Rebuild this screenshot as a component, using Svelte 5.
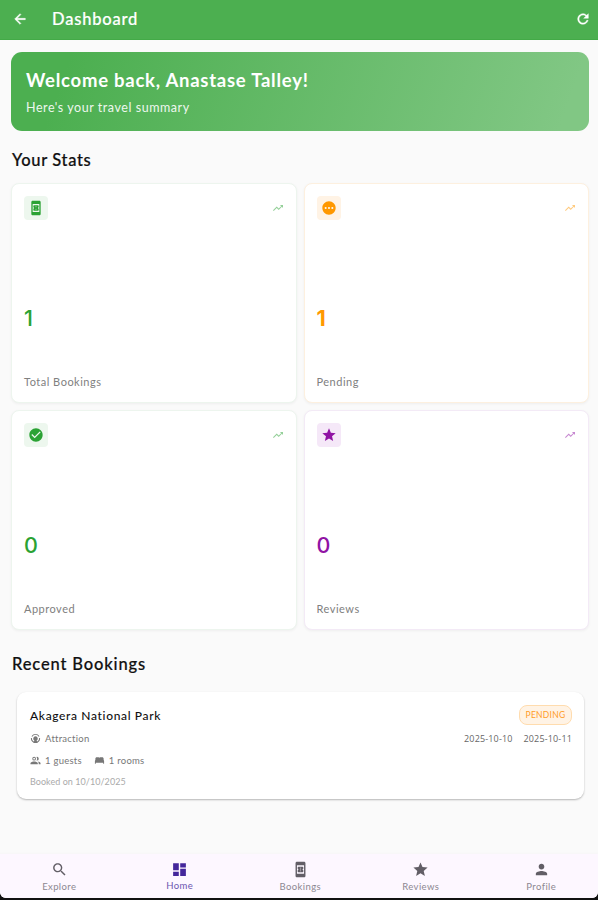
<script lang="ts">
  const icons: Record<string, string> = {
    back: 'M20 11H7.83l5.59-5.59L12 4l-8 8 8 8 1.41-1.41L7.83 13H20v-2z',
    refresh:
      'M17.65 6.35C16.2 4.9 14.21 4 12 4c-4.42 0-7.99 3.58-7.99 8s3.57 8 7.99 8c3.73 0 6.84-2.55 7.73-6h-2.08c-.82 2.33-3.04 4-5.65 4-3.31 0-6-2.69-6-6s2.69-6 6-6c1.66 0 3.14.69 4.22 1.78L13 11h7V4l-2.35 2.35z',
    booking:
      'M17 1H7c-1.1 0-2 .9-2 2v18c0 1.1.9 2 2 2h10c1.1 0 2-.9 2-2V3c0-1.1-.9-2-2-2zM7 18V6h10v12H7zm9-7V9.14C16 8.51 15.55 8 15 8H9c-.55 0-1 .51-1 1.14V11c.55 0 1 .45 1 1s-.45 1-1 1v1.86c0 .63.45 1.14 1 1.14h6c.55 0 1-.51 1-1.14V13c-.55 0-1-.45-1-1s.45-1 1-1zm-3.5 3.5h-1v-1h1v1zm0-2h-1v-1h1v1zm0-2h-1v-1h1v1z',
    pending:
      'M12 2C6.48 2 2 6.48 2 12s4.48 10 10 10 10-4.48 10-10S17.52 2 12 2zM7 13.5c-.83 0-1.5-.67-1.5-1.5s.67-1.5 1.5-1.5 1.5.67 1.5 1.5-.67 1.5-1.5 1.5zm5 0c-.83 0-1.5-.67-1.5-1.5s.67-1.5 1.5-1.5 1.5.67 1.5 1.5-.67 1.5-1.5 1.5zm5 0c-.83 0-1.5-.67-1.5-1.5s.67-1.5 1.5-1.5 1.5.67 1.5 1.5-.67 1.5-1.5 1.5z',
    check:
      'M12 2C6.48 2 2 6.48 2 12s4.48 10 10 10 10-4.48 10-10S17.52 2 12 2zm-2 15l-5-5 1.41-1.41L10 14.17l7.59-7.59L19 8l-9 9z',
    star: 'M12 17.27L18.18 21l-1.64-7.03L22 9.24l-7.19-.61L12 2 9.19 8.63 2 9.24l5.46 4.73L5.82 21z',
    trend: 'M16 6l2.29 2.29-4.88 4.88-4-4L2 16.59 3.41 18l6-6 4 4 6.3-6.29L22 12V6z',
    search:
      'M15.5 14h-.79l-.28-.27C15.41 12.59 16 11.11 16 9.5 16 5.91 13.09 3 9.5 3S3 5.91 3 9.5 5.91 16 9.5 16c1.61 0 3.09-.59 4.23-1.57l.27.28v.79l5 4.99L20.49 19l-4.99-5zm-6 0C7.01 14 5 11.99 5 9.5S7.01 5 9.5 5 14 7.01 14 9.5 11.99 14 9.5 14z',
    dashboard: 'M3 13h8V3H3v10zm0 8h8v-6H3v6zm10 0h8V11h-8v10zm0-18v6h8V3h-8z',
    person:
      'M12 12c2.21 0 4-1.79 4-4s-1.79-4-4-4-4 1.79-4 4 1.79 4 4 4zm0 2c-2.67 0-8 1.34-8 4v2h16v-2c0-2.66-5.33-4-8-4z',
    group:
      'M9 12a4 4 0 1 0 0-8 4 4 0 0 0 0 8zm0-2a2 2 0 1 1 0-4 2 2 0 0 1 0 4zM1 20v-2c0-2.66 5.33-4 8-4s8 1.34 8 4v2H1zm14-8a4 4 0 1 0-1-7.86 6 6 0 0 1 0 7.72c.32.09.66.14 1 .14zm1.7 2.13A5 5 0 0 1 19 18v2h4v-2c0-2.18-3.58-3.47-6.3-3.87z',
    bed: 'M21 10.78V8c0-1.65-1.35-3-3-3h-4c-.77 0-1.47.3-2 .78A3 3 0 0 0 10 5H6C4.35 5 3 6.35 3 8v2.78A3 3 0 0 0 2 13v6h2v-2h16v2h2v-6c0-.88-.39-1.67-1-2.22z',
    attraction:
      'M12 2a10 10 0 0 0-8.7 5l1.7 1a8 8 0 0 1 14 0l1.7-1A10 10 0 0 0 12 2zM2 11a10 10 0 0 0 6 10l.8-1.9A8 8 0 0 1 4 11H2zm18 0a8 8 0 0 1-4.8 8.1L16 21a10 10 0 0 0 6-10h-2zM12 7a5 5 0 0 0-2.5 9.3L7.5 22h9l-2-5.7A5 5 0 0 0 12 7z'
  };

  const stats = [
    { label: 'Total Bookings', value: 1, icon: 'booking', tone: 'green' },
    { label: 'Pending', value: 1, icon: 'pending', tone: 'orange' },
    { label: 'Approved', value: 0, icon: 'check', tone: 'green' },
    { label: 'Reviews', value: 0, icon: 'star', tone: 'purple' }
  ];

  const tabs = [
    { label: 'Explore', icon: 'search' },
    { label: 'Home', icon: 'dashboard' },
    { label: 'Bookings', icon: 'booking' },
    { label: 'Reviews', icon: 'star' },
    { label: 'Profile', icon: 'person' }
  ];

  let activeTab = $state('Home');
</script>

{#snippet icon(name: string)}
  <svg class="icon" viewBox="0 0 24 24" aria-hidden="true"><path d={icons[name]} /></svg>
{/snippet}

<div class="screen">
  <div class="page">
    <header>
      <button class="back" aria-label="Back">{@render icon('back')}</button>
      <h1>Dashboard</h1>
      <button class="refresh" aria-label="Refresh">{@render icon('refresh')}</button>
    </header>

    <main>
      <section class="banner">
        <h2>Welcome back, Anastase Talley!</h2>
        <p>Here's your travel summary</p>
      </section>

      <h3 class="stats-title">Your Stats</h3>
      <div class="stats">
        {#each stats as stat}
          <div class="stat {stat.tone}">
            <div class="stat-top">
              <span class="stat-icon">{@render icon(stat.icon)}</span>
              <span class="trend">{@render icon('trend')}</span>
            </div>
            <strong>{stat.value}</strong>
            <span class="stat-label">{stat.label}</span>
          </div>
        {/each}
      </div>

      <h3 class="recent-title">Recent Bookings</h3>
      <article class="booking">
        <div class="row">
          <h4>Akagera National Park</h4>
          <span class="badge">PENDING</span>
        </div>
        <div class="row kind">
          <span class="meta">{@render icon('attraction')}<span>Attraction</span></span>
          <span class="dates"><span>2025-10-10</span><span>2025-10-11</span></span>
        </div>
        <div class="counts">
          <span class="meta">{@render icon('group')}<span>1 guests</span></span>
          <span class="meta">{@render icon('bed')}<span>1 rooms</span></span>
        </div>
        <p class="booked">Booked on 10/10/2025</p>
      </article>
    </main>

    <nav>
      {#each tabs as tab}
        <button class="tab" class:active={activeTab === tab.label} onclick={() => (activeTab = tab.label)}>
          {@render icon(tab.icon)}
          <span>{tab.label}</span>
        </button>
      {/each}
    </nav>
  </div>
</div>

<style>
  :global(body) {
    margin: 0;
    background: #111;
  }

  .screen {
    height: 900px;
    background: #111;
    font-family: Lato, 'Open Sans', sans-serif;
  }

  .page {
    display: flex;
    flex-direction: column;
    height: 898px;
    overflow: hidden;
    border-radius: 0 0 6px 6px;
    background: #fafafa;
  }

  h1, h2, h3, h4, p {
    margin: 0;
    white-space: nowrap;
  }

  button {
    padding: 0;
    border: 0;
    background: none;
    color: inherit;
    font: inherit;
  }

  .icon {
    display: block;
    width: 16px;
    height: 16px;
    fill: currentColor;
  }

  header {
    display: flex;
    align-items: center;
    box-sizing: border-box;
    flex: none;
    height: 40px;
    padding: 0 7px 2px 12px;
    border-bottom: 1px solid #43aa47;
    background: #4caf50;
    color: #fff;
  }

  header .icon {
    stroke: currentColor;
    stroke-width: 0.6;
  }

  h1 {
    flex: 1;
    margin-left: 24px;
    font-size: 16.5px;
    font-weight: 500;
    letter-spacing: 0.8px;
    -webkit-text-stroke: 0.2px currentColor;
  }

  main {
    flex: 1;
    padding: 12px 9px 0 11px;
  }

  .banner {
    box-sizing: border-box;
    height: 79px;
    padding: 17px 15px;
    border-radius: 11px;
    background: linear-gradient(110deg, #4caf50 10%, #81c784 95%);
    color: #fff;
  }

  h2 {
    font-size: 18.5px;
    line-height: 23px;
    font-weight: 700;
    letter-spacing: 0.75px;
  }

  .banner p {
    margin-top: 8px;
    font-size: 12.5px;
    line-height: 16px;
    letter-spacing: 0.55px;
    opacity: 0.9;
  }

  h3 {
    padding-left: 1px;
    color: #111;
    font-size: 16.5px;
    line-height: 22px;
    font-weight: 500;
    letter-spacing: 0.65px;
    -webkit-text-stroke: 0.2px currentColor;
  }

  .stats-title {
    margin: 18px 0 12px;
  }

  .stats {
    display: grid;
    grid-template-columns: 1fr 1fr;
    grid-auto-rows: 220px;
    gap: 7px;
  }

  .stat {
    display: flex;
    flex-direction: column;
    box-sizing: border-box;
    padding: 12px 12px 11px;
    border: 1px solid var(--edge);
    border-radius: 8px;
    background: #fff;
    box-shadow: 0 1px 3px rgba(0, 0, 0, 0.05);
    color: var(--color);
  }

  .green {
    --color: #2ba234;
    --tint: #edf7ee;
    --edge: #edf5ee;
  }

  .orange {
    --color: #ff9800;
    --tint: #fff3e5;
    --edge: #fdf0df;
  }

  .purple {
    --color: #9013a4;
    --tint: #f5e8f8;
    --edge: #f3eaf6;
  }

  .stat-top {
    display: flex;
    align-items: center;
    justify-content: space-between;
  }

  .stat-icon {
    padding: 4px;
    border-radius: 4px;
    background: var(--tint);
  }

  .trend {
    opacity: 0.5;
  }

  .trend .icon {
    width: 12px;
    height: 12px;
  }

  strong {
    margin: auto 0 41px;
    font-family: Inter, 'Open Sans', sans-serif;
    font-size: 21.5px;
    line-height: 28px;
    font-weight: 500;
  }

  .orange strong {
    font-weight: 700;
  }

  .stat-label {
    color: #808080;
    font-size: 11px;
    line-height: 18px;
    letter-spacing: 0.5px;
  }

  .recent-title {
    margin: 23px 0 17px;
    letter-spacing: 0.85px;
  }

  .booking {
    box-sizing: border-box;
    height: 107px;
    margin: 0 5px 0 6px;
    padding: 13px 12px 0 13px;
    border-radius: 9px;
    background: #fff;
    box-shadow: 0 1px 2px rgba(0, 0, 0, 0.28);
    color: #777;
    font-size: 9.5px;
    letter-spacing: 0.25px;
  }

  .row {
    display: flex;
    align-items: center;
    justify-content: space-between;
  }

  h4 {
    color: #111;
    font-size: 12px;
    font-weight: 500;
    letter-spacing: 0.65px;
  }

  .badge {
    box-sizing: border-box;
    width: 53px;
    height: 20px;
    border: 1px solid #ffdcae;
    border-radius: 8px;
    background: #fff3e5;
    color: #ff9c28;
    font-size: 8.5px;
    line-height: 18px;
    text-align: center;
  }

  .kind {
    height: 14px;
    margin-top: 6px;
  }

  .meta {
    display: flex;
    align-items: center;
    gap: 4px;
  }

  .meta .icon {
    width: 11px;
    height: 11px;
  }

  .dates {
    display: flex;
    gap: 11px;
    color: #666;
    font-family: 'Open Sans', sans-serif;
    font-size: 9px;
    letter-spacing: 0.15px;
  }

  .counts {
    display: flex;
    gap: 12px;
    height: 14px;
    margin-top: 8px;
  }

  .booked {
    margin-top: 8px;
    color: #aaa;
    font-size: 9px;
    line-height: 13px;
    letter-spacing: 0.05px;
  }

  nav {
    display: grid;
    grid-template-columns: repeat(5, 120.5px);
    flex: none;
    height: 44px;
    margin-left: -1px;
    background: #fdf7ff;
    box-shadow: 0 -1px 2px rgba(80, 50, 90, 0.02);
    color: #625e66;
  }

  .tab {
    display: flex;
    flex-direction: column;
    align-items: center;
    padding-top: 7px;
  }

  .tab .icon {
    width: 17px;
    height: 17px;
  }

  .tab span {
    margin-top: 3px;
    color: #8c8791;
    font-size: 9.5px;
    line-height: 12px;
    letter-spacing: 0.4px;
  }

  .tab.active {
    color: #44279b;
  }

  .tab.active span {
    margin-top: 2px;
    color: #6b55b0;
  }
</style>
